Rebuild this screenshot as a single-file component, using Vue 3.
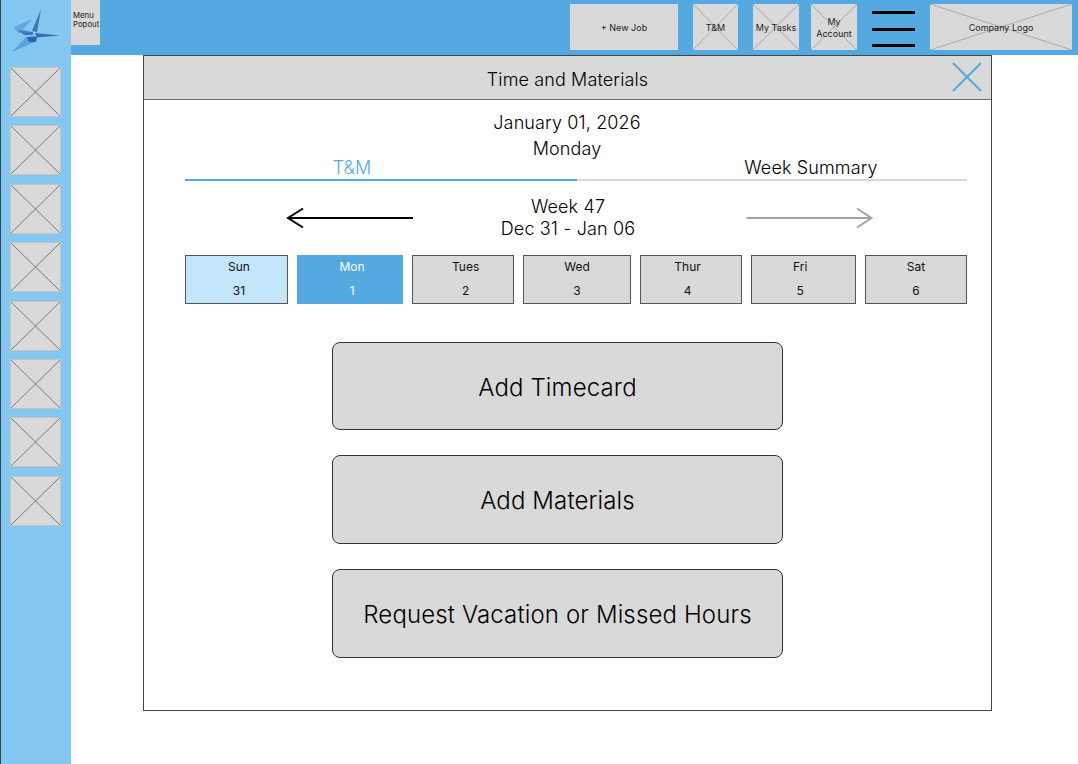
<script setup>
const thumbs = [1, 2, 3, 4, 5, 6, 7, 8]
const days = [
  { name: 'Sun', num: 31, kind: 'past', place: 'nudge-r3' },
  { name: 'Mon', num: 1, kind: 'active', place: 'nudge-r2' },
  { name: 'Tues', num: 2, kind: '', place: 'nudge-r3' },
  { name: 'Wed', num: 3, kind: '', place: '' },
  { name: 'Thur', num: 4, kind: '', place: 'nudge-l4' },
  { name: 'Fri', num: 5, kind: '', place: 'nudge-l4' },
  { name: 'Sat', num: 6, kind: '', place: '' }
]
const actions = ['Add Timecard', 'Add Materials', 'Request Vacation or Missed Hours']
</script>

<template>
  <div class="page">
    <aside class="sidebar">
      <div class="logo">
        <svg width="70" height="55" viewBox="1 0 70 55">
          <polygon points="14,27 32,19 23,29 33,33 18,33" fill="#5aa9e0" />
          <polygon points="12,52 27,36 35,42" fill="#55a6df" />
          <polygon points="41,9 37,32 32,31" fill="#3f73b8" />
          <polygon points="35,33 60,35.5 37,37.5" fill="#3a6fb5" />
          <polygon points="27,37 37,36.5 36,42 29,42" fill="#2f62a8" />
          <polygon points="18,30.5 33,32 33,35 24,35" fill="#3f78bd" />
        </svg>
      </div>
      <div class="thumbs">
        <div v-for="t in thumbs" :key="t" class="ph thumb">
          <svg class="cross" viewBox="0 0 100 100" preserveAspectRatio="none">
            <line x1="0" y1="0" x2="100" y2="100" vector-effect="non-scaling-stroke" />
            <line x1="100" y1="0" x2="0" y2="100" vector-effect="non-scaling-stroke" />
          </svg>
        </div>
      </div>
    </aside>

    <div class="main">
      <header class="topbar">
        <div class="popout">Menu<br />Popout</div>
        <div class="ph new-job"><span>+ New Job</span></div>
        <div class="ph tb tb-tm">
          <svg class="cross light" viewBox="0 0 100 100" preserveAspectRatio="none">
            <line x1="0" y1="0" x2="100" y2="100" vector-effect="non-scaling-stroke" />
            <line x1="100" y1="0" x2="0" y2="100" vector-effect="non-scaling-stroke" />
          </svg>
          <span>T&amp;M</span>
        </div>
        <div class="ph tb tb-tasks">
          <svg class="cross light" viewBox="0 0 100 100" preserveAspectRatio="none">
            <line x1="0" y1="0" x2="100" y2="100" vector-effect="non-scaling-stroke" />
            <line x1="100" y1="0" x2="0" y2="100" vector-effect="non-scaling-stroke" />
          </svg>
          <span>My Tasks</span>
        </div>
        <div class="ph tb tb-account">
          <svg class="cross light" viewBox="0 0 100 100" preserveAspectRatio="none">
            <line x1="0" y1="0" x2="100" y2="100" vector-effect="non-scaling-stroke" />
            <line x1="100" y1="0" x2="0" y2="100" vector-effect="non-scaling-stroke" />
          </svg>
          <span>My<br />Account</span>
        </div>
        <div class="burger"><i></i><i></i><i></i></div>
        <div class="ph company">
          <svg class="cross light" viewBox="0 0 100 100" preserveAspectRatio="none">
            <line x1="0" y1="0" x2="100" y2="100" vector-effect="non-scaling-stroke" />
            <line x1="100" y1="0" x2="0" y2="100" vector-effect="non-scaling-stroke" />
          </svg>
          <span>Company Logo</span>
        </div>
      </header>

      <section class="modal">
        <div class="modal-head">
          <h1>Time and Materials</h1>
          <svg class="close" width="30" height="30" viewBox="0 0 30 30">
            <path d="M1 1 L29 29 M29 1 L1 29" fill="none" stroke="#54a9e0" stroke-width="2" />
          </svg>
        </div>
        <div class="modal-body">
          <div class="date">January 01, 2026</div>
          <div class="date">Monday</div>
          <div class="tabs">
            <div class="tab on">T&amp;M</div>
            <div class="tab">Week Summary</div>
          </div>
          <div class="week-nav">
            <svg width="128" height="22" viewBox="0 0 128 22">
              <path d="M127 11 H2 M17 1.5 L2 11 L17 20.5" fill="none" stroke="#000" stroke-width="2" />
            </svg>
            <div class="week-label">Week 47<br />Dec 31 - Jan 06</div>
            <svg width="128" height="22" viewBox="0 0 128 22">
              <path d="M0.5 11 H125 M111 1.5 L125.5 11 L111 20.5" fill="none" stroke="#a3a3a3" stroke-width="2" />
            </svg>
          </div>
          <div class="days">
            <div v-for="d in days" :key="d.name" class="day" :class="[d.kind, d.place]">
              <span>{{ d.name }}</span>
              <span>{{ d.num }}</span>
            </div>
          </div>
          <div class="actions">
            <button v-for="a in actions" :key="a" class="action">{{ a }}</button>
          </div>
        </div>
      </section>
    </div>
  </div>
</template>

<style>
html, body { margin: 0; background: #fff; }
</style>

<style scoped>
.page {
  display: flex;
  width: 1078px;
  height: 764px;
  overflow: hidden;
  font-family: Inter, "Liberation Sans", sans-serif;
  font-weight: 350;
  letter-spacing: 0.008em;
  color: #000;
}
.sidebar {
  width: 71px;
  flex: none;
  box-sizing: border-box;
  background: #84c8f2;
  border-left: 1px solid #30485a;
}
.logo { height: 55px; }
.logo svg { display: block; }
.thumbs {
  display: flex;
  flex-direction: column;
  gap: 8.4px;
  padding: 12px 0 0 9px;
}
.ph {
  position: relative;
  background: #d9d9d9;
  box-sizing: border-box;
  flex: none;
}
.thumb {
  width: 51px;
  height: 50px;
  border: 1px solid #c4c4c4;
}
.cross {
  position: absolute;
  inset: 0;
  width: 100%;
  height: 100%;
}
.cross line { stroke: #7a7a7a; stroke-width: 1; }
.cross.light line { stroke: #ababab; }
.main {
  flex: 1;
  min-width: 0;
}
.topbar {
  height: 55px;
  background: #54a9e0;
  display: flex;
  align-items: flex-start;
  padding-top: 4px;
  box-sizing: border-box;
  font-size: 9px;
  font-weight: 400;
  letter-spacing: 0;
  color: #222;
}
.popout {
  width: 29px;
  height: 45px;
  margin-top: -4px;
  background: #d9d9d9;
  font-size: 7.8px;
  line-height: 9px;
  padding: 11px 0 0 2px;
  box-sizing: border-box;
  flex: none;
}
.new-job, .tb, .company {
  height: 46px;
  padding-top: 2px;
  display: flex;
  align-items: center;
  justify-content: center;
  text-align: center;
  line-height: 12px;
}
.ph span { position: relative; }
.new-job { width: 108px; margin-left: 470px; }
.tb-tm { width: 45px; margin-left: 15px; }
.tb-tasks { width: 46px; margin-left: 15px; }
.tb-account { width: 46px; margin-left: 12px; }
.burger {
  width: 43px;
  height: 36px;
  margin: 7px 0 0 15px;
  display: flex;
  flex-direction: column;
  justify-content: space-between;
  flex: none;
}
.burger i { display: block; height: 3px; background: #000; }
.company { width: 142px; margin-left: 15px; }

.modal {
  width: 849px;
  height: 656px;
  margin-left: 72px;
  border: 1px solid #444;
  box-sizing: border-box;
  background: #fff;
}
.modal-head {
  position: relative;
  height: 44px;
  box-sizing: border-box;
  padding-top: 4px;
  background: #d9d9d9;
  border-bottom: 1px solid #6f6f6f;
  display: flex;
  align-items: center;
  justify-content: center;
}
.modal-head h1 {
  margin: 0;
  font-size: 18px;
  font-weight: inherit;
}
.close { position: absolute; right: 9px; top: 6px; }
.modal-body {
  padding: 10px 24px 0 41px;
}
.date {
  padding-right: 18px;
  text-align: center;
  font-size: 18px;
  line-height: 26px;
}
.tabs {
  display: grid;
  grid-template-columns: 392px 390px;
  margin-top: -7px;
}
.tab {
  text-align: center;
  font-size: 18px;
  line-height: 22px;
  padding-top: 2px;
  border-bottom: 2px solid #d9d9d9;
}
.tab.on { color: #54a9e0; border-bottom-color: #54a9e0; padding-right: 58px; }
.tab:not(.on) { padding-left: 78px; }
.week-nav {
  display: flex;
  align-items: center;
  margin-top: 15px;
  padding-left: 101px;
}
.week-label {
  width: 332px;
  box-sizing: border-box;
  padding-right: 24px;
  text-align: center;
  font-size: 18px;
  line-height: 22px;
}
.week-nav svg { display: block; flex: none; }
.days {
  display: grid;
  grid-template-columns: 103px 106.5px 102px 108px 102.5px 105px 102px;
  justify-content: space-between;
  width: 782px;
  margin-top: 15px;
}
.day {
  height: 49px;
  border: 1px solid #555;
  background: #d9d9d9;
  box-sizing: border-box;
  display: flex;
  flex-direction: column;
  align-items: center;
  justify-content: space-between;
  padding-top: 3px;
  padding-bottom: 5px;
  font-size: 12px;
  font-weight: 400;
  letter-spacing: 0;
  line-height: 15px;
  color: #111;
}
.nudge-r2 { padding-left: 4px; }
.nudge-r3 { padding-left: 5px; }
.nudge-l4 { padding-right: 7px; }
.day.past {
  background-color: #c3e5fa;
  background-image: radial-gradient(#b8def6 0.6px, transparent 0.7px);
  background-size: 4px 4px;
}
.day.active {
  background-color: #54a9e0;
  background-image: radial-gradient(#5dafe3 0.6px, transparent 0.7px);
  background-size: 4px 4px;
  border-color: #54a9e0;
  color: #fff;
}
.actions {
  display: flex;
  flex-direction: column;
  gap: 25px;
  width: 451px;
  margin: 38px 0 0 147px;
}
.action {
  height: 89px;
  border: 1px solid #333;
  border-radius: 8px;
  background: #d9d9d9;
  font: inherit;
  letter-spacing: inherit;
  font-size: 24px;
  color: #000;
  padding: 2px 0 0;
}
.action:first-child { height: 88px; }
</style>
